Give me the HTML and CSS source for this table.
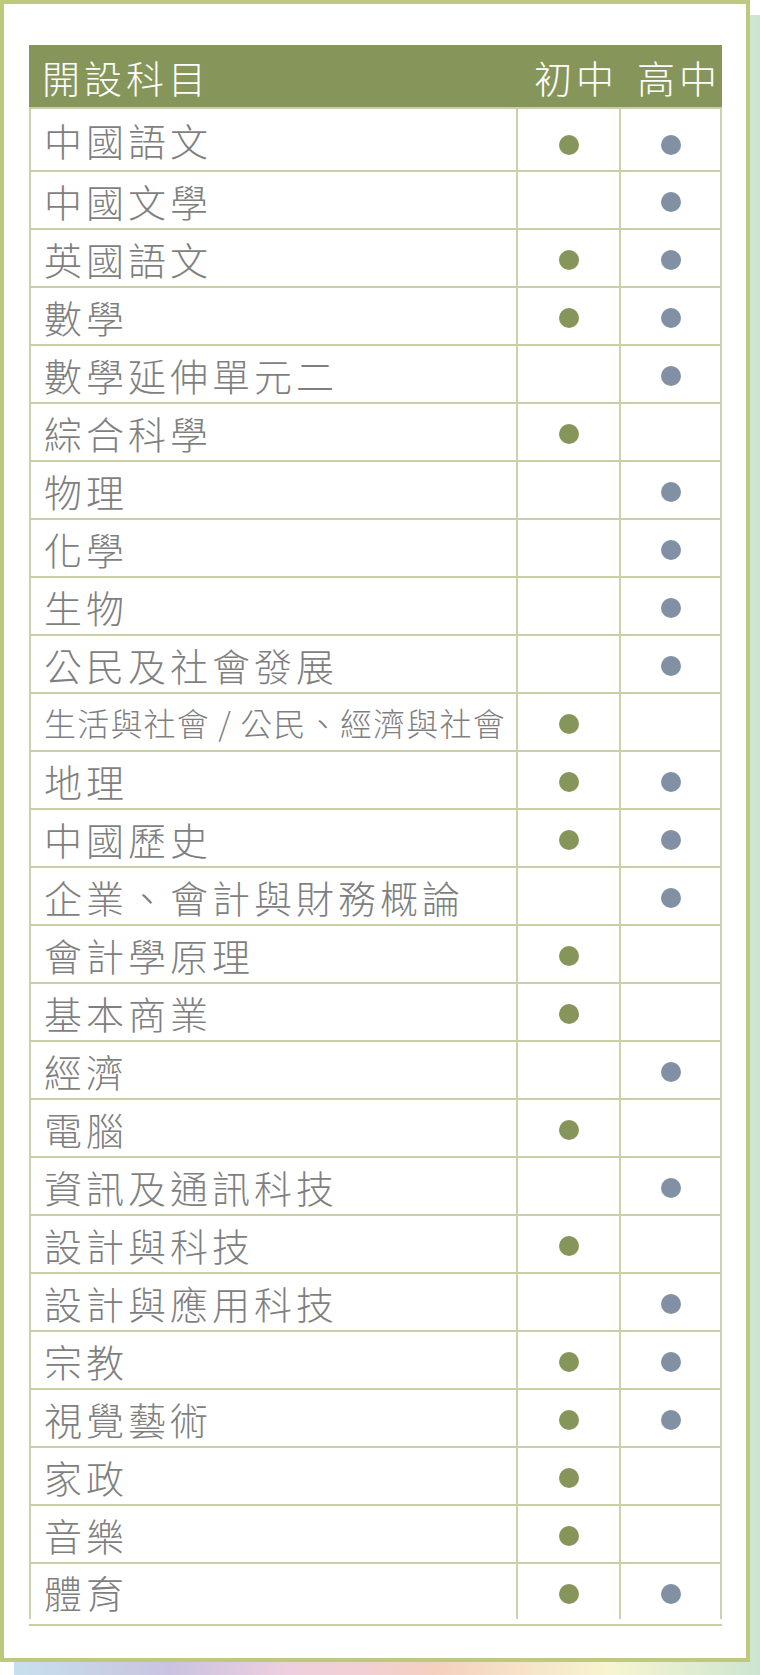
FILE: index.html
```html
<!DOCTYPE html>
<html lang="zh-Hant">
<head>
    <meta charset="UTF-8">
    <meta name="viewport" content="width=device-width, initial-scale=1.0">
    <title>開設科目</title>
    <link rel="stylesheet" href="styles.css">
</head>
<body>
    <div class="page">
        <div class="frame">
            <div class="table-wrap">
                <table class="subjects">
                    <colgroup>
                        <col>
                        <col class="level-col">
                        <col class="level-col">
                    </colgroup>
                    <thead>
                        <tr>
                            <th class="title">開設科目</th>
                            <th class="level">初中</th>
                            <th class="level">高中</th>
                        </tr>
                    </thead>
                    <tbody>
                        <tr class="first">
                            <td class="name">中國語文</td>
                            <td class="mark"><span class="dot"></span></td>
                            <td class="mark"><span class="dot blue"></span></td>
                        </tr>
                        <tr>
                            <td class="name">中國文學</td>
                            <td class="mark"></td>
                            <td class="mark"><span class="dot blue"></span></td>
                        </tr>
                        <tr>
                            <td class="name">英國語文</td>
                            <td class="mark"><span class="dot"></span></td>
                            <td class="mark"><span class="dot blue"></span></td>
                        </tr>
                        <tr>
                            <td class="name">數學</td>
                            <td class="mark"><span class="dot"></span></td>
                            <td class="mark"><span class="dot blue"></span></td>
                        </tr>
                        <tr>
                            <td class="name">數學延伸單元二</td>
                            <td class="mark"></td>
                            <td class="mark"><span class="dot blue"></span></td>
                        </tr>
                        <tr>
                            <td class="name">綜合科學</td>
                            <td class="mark"><span class="dot"></span></td>
                            <td class="mark"></td>
                        </tr>
                        <tr>
                            <td class="name">物理</td>
                            <td class="mark"></td>
                            <td class="mark"><span class="dot blue"></span></td>
                        </tr>
                        <tr>
                            <td class="name">化學</td>
                            <td class="mark"></td>
                            <td class="mark"><span class="dot blue"></span></td>
                        </tr>
                        <tr>
                            <td class="name">生物</td>
                            <td class="mark"></td>
                            <td class="mark"><span class="dot blue"></span></td>
                        </tr>
                        <tr>
                            <td class="name">公民及社會發展</td>
                            <td class="mark"></td>
                            <td class="mark"><span class="dot blue"></span></td>
                        </tr>
                        <tr>
                            <td class="name small">生活與社會 / 公民、經濟與社會</td>
                            <td class="mark"><span class="dot"></span></td>
                            <td class="mark"></td>
                        </tr>
                        <tr>
                            <td class="name">地理</td>
                            <td class="mark"><span class="dot"></span></td>
                            <td class="mark"><span class="dot blue"></span></td>
                        </tr>
                        <tr>
                            <td class="name">中國歷史</td>
                            <td class="mark"><span class="dot"></span></td>
                            <td class="mark"><span class="dot blue"></span></td>
                        </tr>
                        <tr>
                            <td class="name">企業、會計與財務概論</td>
                            <td class="mark"></td>
                            <td class="mark"><span class="dot blue"></span></td>
                        </tr>
                        <tr>
                            <td class="name">會計學原理</td>
                            <td class="mark"><span class="dot"></span></td>
                            <td class="mark"></td>
                        </tr>
                        <tr>
                            <td class="name">基本商業</td>
                            <td class="mark"><span class="dot"></span></td>
                            <td class="mark"></td>
                        </tr>
                        <tr>
                            <td class="name">經濟</td>
                            <td class="mark"></td>
                            <td class="mark"><span class="dot blue"></span></td>
                        </tr>
                        <tr>
                            <td class="name">電腦</td>
                            <td class="mark"><span class="dot"></span></td>
                            <td class="mark"></td>
                        </tr>
                        <tr>
                            <td class="name">資訊及通訊科技</td>
                            <td class="mark"></td>
                            <td class="mark"><span class="dot blue"></span></td>
                        </tr>
                        <tr>
                            <td class="name">設計與科技</td>
                            <td class="mark"><span class="dot"></span></td>
                            <td class="mark"></td>
                        </tr>
                        <tr>
                            <td class="name">設計與應用科技</td>
                            <td class="mark"></td>
                            <td class="mark"><span class="dot blue"></span></td>
                        </tr>
                        <tr>
                            <td class="name">宗教</td>
                            <td class="mark"><span class="dot"></span></td>
                            <td class="mark"><span class="dot blue"></span></td>
                        </tr>
                        <tr>
                            <td class="name">視覺藝術</td>
                            <td class="mark"><span class="dot"></span></td>
                            <td class="mark"><span class="dot blue"></span></td>
                        </tr>
                        <tr>
                            <td class="name">家政</td>
                            <td class="mark"><span class="dot"></span></td>
                            <td class="mark"></td>
                        </tr>
                        <tr>
                            <td class="name">音樂</td>
                            <td class="mark"><span class="dot"></span></td>
                            <td class="mark"></td>
                        </tr>
                        <tr class="last">
                            <td class="name">體育</td>
                            <td class="mark"><span class="dot"></span></td>
                            <td class="mark"><span class="dot blue"></span></td>
                        </tr>
                    </tbody>
                </table>
            </div>
        </div>
    </div>
</body>
</html>
```

FILE: styles.css
```css
body {
    margin: 0;
    background-color: white;
    font-family: "Noto Sans CJK TC", "Noto Sans CJK SC", sans-serif;
}
.page {
    width: 760px;
    height: 1675px;
    box-sizing: border-box;
    padding: 0 10px 13px 0;
    background: linear-gradient(to right, #c6e0ee 0%, #cac3df 21%, #efcfdf 37%, #f3cfcf 49%, #f5cfbf 56%, #f7f5d0 80%, #cce5d0 100%) 14px 15px / 746px 1660px no-repeat;
}
.frame {
    height: 100%;
    box-sizing: border-box;
    border: 4px solid #bec87e;
    background-color: white;
    padding: 41px 24px 0 25px;
}
.table-wrap {
    padding-bottom: 5px;
    border-bottom: 2px solid #c9cfa5;
}
.subjects {
    width: 100%;
    border-collapse: separate;
    border-spacing: 0;
    table-layout: fixed;
}
.level-col {
    width: 103px;
}
.subjects th {
    height: 62px;
    padding: 0;
    background-color: #86965a;
    color: white;
    font-size: 38px;
    font-weight: 300;
    letter-spacing: 4px;
    text-align: left;
    white-space: nowrap;
}
.subjects th.title {
    padding-left: 13px;
}
.subjects th.level {
    padding-left: 18px;
}
.subjects tr {
    height: 58px;
}
.subjects tr.first {
    height: 63px;
}
.subjects tr.last {
    height: 51px;
}
.subjects td {
    padding: 0;
    border-top: 2px solid #c9cfa5;
    border-left: 2px solid #cdd1b2;
    vertical-align: middle;
}
.subjects td:last-child {
    border-right: 2px solid #cdd1b2;
}
.subjects td.name {
    padding-left: 13px;
    color: #7f7f7f;
    font-size: 38px;
    font-weight: 300;
    letter-spacing: 4px;
    white-space: nowrap;
}
.subjects td.small {
    font-size: 32px;
    letter-spacing: 1.2px;
}
.mark {
    text-align: center;
}
.subjects .first .mark {
    padding-top: 7px;
}
.dot {
    display: inline-block;
    width: 20px;
    height: 20px;
    border-radius: 50%;
    background-color: #86965a;
    vertical-align: middle;
}
.dot.blue {
    background-color: #8190a3;
}
```
